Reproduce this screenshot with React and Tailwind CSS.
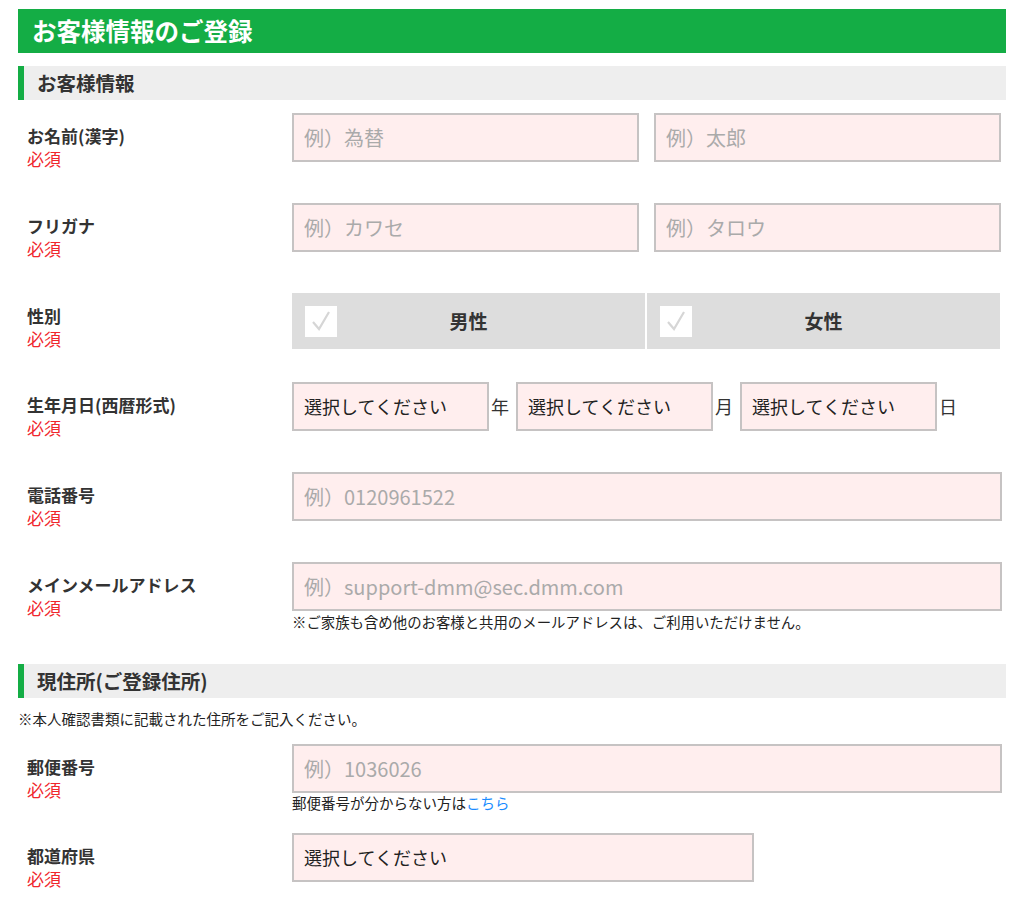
const FONT = { fontFamily: '"Hiragino Kaku Gothic ProN", "Noto Sans CJK JP", "Noto Sans", sans-serif' };

function Label({ title }) {
  return (
    <div className="w-[274px] shrink-0 pl-[9px] pt-[11px] leading-[23px]">
      <p className="text-[17px] font-bold text-[#333]">{title}</p>
      <p className="text-[17px] text-[#f0262c]">必須</p>
    </div>
  );
}

function TextInput({ placeholder, className = "" }) {
  return (
    <input
      type="text"
      placeholder={placeholder}
      style={FONT}
      className={`h-[49px] border-2 border-[#c6c3c3] bg-[#ffeeee] px-[10px] text-[20px] text-[#333] outline-none placeholder:text-[#aaa] ${className}`}
    />
  );
}

function Select({ className = "" }) {
  return (
    <div
      className={`flex h-[49px] items-center border-2 border-[#c6c3c3] bg-[#ffeeee] px-[10px] text-[18px] text-[#222] ${className}`}
    >
      選択してください
    </div>
  );
}

function SectionHeader({ title, className = "" }) {
  return (
    <div
      className={`flex h-[34px] items-center border-l-[6px] border-[#14ad45] bg-[#eeeeee] pl-[13px] ${className}`}
    >
      <h2 className="text-[19.5px] font-bold text-[#333]">{title}</h2>
    </div>
  );
}

function Check() {
  return (
    <span className="flex h-[31px] w-[32px] items-center justify-center bg-white">
      <svg width="24" height="24" viewBox="0 0 24 24">
        <polyline points="4,13 10,20 20,3" fill="none" stroke="#d6d6d6" strokeWidth="2.2" />
      </svg>
    </span>
  );
}

export default function App() {
  return (
    <div style={FONT} className="bg-white px-[18px] pt-[9px] pb-[20px] w-[1024px]">
      {/* page title */}
      <div className="flex h-[44px] items-center bg-[#14ad45] pl-[14px]">
        <h1 className="text-[24.5px] font-bold text-white">お客様情報のご登録</h1>
      </div>

      <SectionHeader title="お客様情報" className="mt-[13px]" />

      {/* name */}
      <div className="mt-[13px] flex">
        <Label title="お名前(漢字)" />
        <div className="flex gap-[15px]">
          <TextInput placeholder="例）為替" className="w-[347px]" />
          <TextInput placeholder="例）太郎" className="w-[347px]" />
        </div>
      </div>

      {/* kana */}
      <div className="mt-[33px] flex">
        <Label title="フリガナ" />
        <div className="flex gap-[15px]">
          <TextInput placeholder="例）カワセ" className="w-[347px]" />
          <TextInput placeholder="例）タロウ" className="w-[347px]" />
        </div>
      </div>

      {/* gender */}
      <div className="mt-[33px] flex">
        <Label title="性別" />
        <div className="flex h-[56px] gap-[2px]">
          {["男性", "女性"].map((g) => (
            <div key={g} className="relative flex w-[353px] items-center bg-[#dddddd] pl-[13px]">
              <Check />
              <span className="absolute inset-0 flex items-center justify-center text-[19px] font-bold text-[#333]">
                {g}
              </span>
            </div>
          ))}
        </div>
      </div>

      {/* birthday */}
      <div className="mt-[32px] flex">
        <Label title="生年月日(西暦形式)" />
        <div className="flex h-[49px] items-center text-[18px] text-[#333]">
          <Select className="w-[197px]" />
          <span className="w-[27px] pl-[2px]">年</span>
          <Select className="w-[197px]" />
          <span className="w-[27px] pl-[2px]">月</span>
          <Select className="w-[197px]" />
          <span className="pl-[2px]">日</span>
        </div>
      </div>

      {/* phone */}
      <div className="mt-[33px] flex">
        <Label title="電話番号" />
        <TextInput placeholder="例）0120961522" className="w-[710px]" />
      </div>

      {/* email */}
      <div className="mt-[33px] flex">
        <Label title="メインメールアドレス" />
        <div className="flex flex-col">
          <TextInput placeholder="例）support-dmm@sec.dmm.com" className="w-[710px]" />
          <p className="mt-[1px] text-[14.4px] leading-[20px] text-[#222]">
            ※ご家族も含め他のお客様と共用のメールアドレスは、ご利用いただけません。
          </p>
        </div>
      </div>

      <SectionHeader title="現住所(ご登録住所)" className="mt-[32px]" />

      <p className="mt-[11px] text-[14.5px] leading-[20px] text-[#222]">
        ※本人確認書類に記載された住所をご記入ください。
      </p>

      {/* postal code */}
      <div className="mt-[15px] flex">
        <Label title="郵便番号" />
        <div className="flex flex-col">
          <TextInput placeholder="例）1036026" className="w-[710px]" />
          <p className="text-[14.5px] leading-[20px] text-[#222]">
            郵便番号が分からない方は<a href="#" className="text-[#1a8cff]">こちら</a>
          </p>
        </div>
      </div>

      {/* prefecture */}
      <div className="mt-[20px] flex">
        <Label title="都道府県" />
        <Select className="w-[462px]" />
      </div>
    </div>
  );
}
